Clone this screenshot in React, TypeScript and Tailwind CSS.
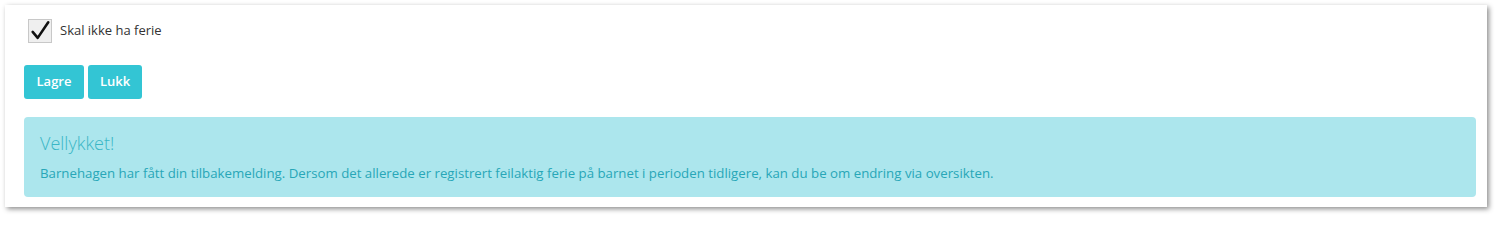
export default function App() {
  return (
    <div className="h-[216px] w-[1496px] bg-white pl-[5px] pt-[5px] font-['Open_Sans',sans-serif]">
      <div className="h-[202px] w-[1482px] bg-white pl-[19px] pr-[11px] pt-[14px] shadow-[2px_2px_5px_rgba(0,0,0,0.45)]">
        <label className="flex items-center gap-2 pl-1 text-[13px] text-[#333]">
          <span className="flex h-6 w-6 items-center justify-center border border-[#c8c8c8] bg-[#efefef]">
            <svg viewBox="0 0 24 24" className="h-[22px] w-[22px]" fill="none" stroke="#111" strokeWidth="2.8" strokeLinecap="round" strokeLinejoin="round">
              <path d="M4 13l5.5 6.5L21 2.5" />
            </svg>
          </span>
          Skal ikke ha ferie
        </label>

        <div className="mt-[22px] flex gap-1">
          <button className="h-[34px] w-[60px] rounded-[3px] bg-[#33c5d4] text-[13px] font-semibold text-white">
            Lagre
          </button>
          <button className="h-[34px] w-[54px] rounded-[3px] bg-[#33c5d4] text-[13px] font-semibold text-white">
            Lukk
          </button>
        </div>

        <div className="mt-[18px] h-[80px] rounded-[4px] bg-[#ace6ed] px-4 pt-[14px]">
          <h4 className="text-[18px] font-light leading-6 text-[#3ab6c6]">Vellykket!</h4>
          <p className="mt-[8px] text-[13.25px] leading-5 text-[#28a7b8]">
            Barnehagen har fått din tilbakemelding. Dersom det allerede er registrert feilaktig ferie på barnet i perioden tidligere, kan du be om endring via oversikten.
          </p>
        </div>
      </div>
    </div>
  );
}
